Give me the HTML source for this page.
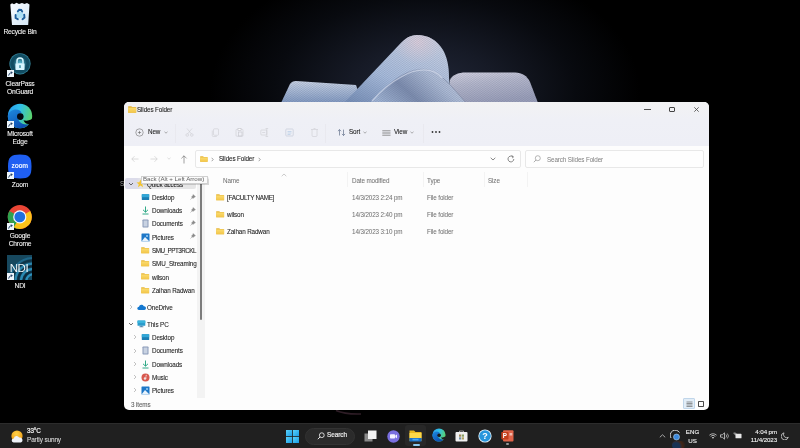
<!DOCTYPE html>
<html><head><meta charset="utf-8">
<style>
*{margin:0;padding:0;box-sizing:border-box}
html,body{width:800px;height:448px;overflow:hidden;background:#000;font-family:"Liberation Sans",sans-serif}
.a{position:absolute;white-space:nowrap;will-change:transform}
#wp{position:absolute;left:0;top:0;width:800px;height:448px}
.di{position:absolute;will-change:transform;width:40px;text-align:center;color:#f2f2f2;font-size:6.7px;letter-spacing:-0.2px;line-height:8px;left:0;-webkit-text-stroke:0.1px currentColor}
#win{position:absolute;left:124px;top:102px;width:585px;height:308px;border-radius:5px;background:#fdfdfd;overflow:hidden}
#tb{position:absolute;left:0;top:0;width:585px;height:43.5px;background:linear-gradient(#f2f2f3,#eff0f6 40%,#eeeff6)}
.t{font-size:6.3px;letter-spacing:-0.12px;color:#1c1c1c;line-height:8px;-webkit-text-stroke:0.08px currentColor}
.g{color:#5c5c5c}
#task{position:absolute;left:0;top:423px;width:800px;height:25px;background:#202020}
</style></head><body>
<svg id="wp" viewBox="0 0 800 448">
<defs>
<radialGradient id="bg" cx="0" cy="0" r="1" gradientUnits="userSpaceOnUse" gradientTransform="translate(425 92) scale(215 135)">
<stop offset="0" stop-color="#222839"/><stop offset="0.35" stop-color="#161a26"/><stop offset="0.7" stop-color="#080a0f"/><stop offset="1" stop-color="#000"/></radialGradient>
<linearGradient id="rib" x1="0" y1="0" x2="0" y2="1">
<stop offset="0" stop-color="#d4cad6"/><stop offset="0.35" stop-color="#b4c0d8"/><stop offset="1" stop-color="#8e9cbc"/>
</linearGradient>
<linearGradient id="ribL" x1="0" y1="0" x2="0" y2="1">
<stop offset="0" stop-color="#cdd6e6"/><stop offset="0.35" stop-color="#b0c0da"/><stop offset="1" stop-color="#8098c0"/></linearGradient>
<linearGradient id="ribA" x1="0.1" y1="1" x2="0.75" y2="0">
<stop offset="0" stop-color="#7890b8"/><stop offset="0.4" stop-color="#a8bcdc"/><stop offset="1" stop-color="#cad2e4"/></linearGradient>
<linearGradient id="ribR" x1="0" y1="0" x2="0.3" y2="1">
<stop offset="0" stop-color="#d6d4e2"/><stop offset="0.4" stop-color="#b6b8cc"/><stop offset="1" stop-color="#9a9eb8"/></linearGradient>
<linearGradient id="ribM" x1="0" y1="0.7" x2="1" y2="0.3">
<stop offset="0" stop-color="#a0b4d4"/><stop offset="0.35" stop-color="#7c8cae"/><stop offset="0.7" stop-color="#aebcd6"/><stop offset="1" stop-color="#c4cce0"/></linearGradient>
<radialGradient id="hiA" cx="0" cy="0" r="1" gradientUnits="userSpaceOnUse" gradientTransform="translate(418 42) scale(26 22)">
<stop offset="0" stop-color="#e2d0dc" stop-opacity="0.85"/><stop offset="1" stop-color="#d8ccd8" stop-opacity="0"/></radialGradient>
<linearGradient id="fdG" x1="0" y1="0" x2="0" y2="1"><stop offset="0" stop-color="#fbdc70"/><stop offset="1" stop-color="#f2c548"/></linearGradient>
<pattern id="stripes" width="1.6" height="1.6" patternUnits="userSpaceOnUse" patternTransform="rotate(35)"><rect width="1.6" height="0.6" fill="#5a6886"/></pattern>
<linearGradient id="rib2" x1="0" y1="0" x2="1" y2="1">
<stop offset="0" stop-color="#c8ccdc"/><stop offset="1" stop-color="#7e8cac"/>
</linearGradient>
</defs>
<rect width="800" height="448" fill="url(#bg)"/>
<path d="M336,410.5 Q345,414.5 361,414" fill="none" stroke="#3a2430" stroke-width="1.4" opacity="0.8"/>
<path d="M281,103 L290,84 Q292,81 296,81 L356,85 L362,103 Z" fill="url(#ribL)"/>
<path d="M281,103 L290,84 Q292,81 296,81 L356,85 L362,103 Z" fill="url(#stripes)" opacity="0.35"/>
<path d="M344,103 L399,45 C405,38.5 410,35 417,35 C428,35 437,40 443,50 C447,57 449,66 449,78 L452,103 Z" fill="url(#ribA)"/>
<path d="M344,103 L399,45 C405,38.5 410,35 417,35 C428,35 437,40 443,50 C447,57 449,66 449,78 L452,103 Z" fill="url(#hiA)"/>
<path d="M344,103 L399,45 C405,38.5 410,35 417,35 C428,35 437,40 443,50 C447,57 449,66 449,78 L452,103 Z" fill="url(#stripes)" opacity="0.3"/>
<path d="M449,103 L450,80 C452,75 458,72.5 466,72.5 L515,72.5 C522,72.5 527,76 530,82 L538,103 Z" fill="url(#ribR)"/>
<path d="M449,103 L450,80 C452,75 458,72.5 466,72.5 L515,72.5 C522,72.5 527,76 530,82 L538,103 Z" fill="url(#stripes)" opacity="0.3"/>
<path d="M370,103 C378,94 388,84 400,76 C410,70 417,68.5 424,68.5 C432,68.5 438,72 443,78 C452,86 459,95 466,103 Z" fill="url(#ribM)"/>
<path d="M370,103 C378,94 388,84 400,76 C410,70 417,68.5 424,68.5 C432,68.5 438,72 443,78 C452,86 459,95 466,103 Z" fill="url(#stripes)" opacity="0.35"/>
<path d="M372,101 C380,92 390,83 401,77 C410,71.5 417,70 424,70 C432,70 438,73 442,78" fill="none" stroke="#d4dcec" stroke-width="1.2" opacity="0.7"/>
<path d="M443,78 C452,86 459,95 466,103" fill="none" stroke="#6a7490" stroke-width="0.8" opacity="0.6"/>
</svg>

<!-- desktop icons -->
<svg class="a" style="left:9px;top:1.5px" width="22" height="24" viewBox="0 0 22 24">
 <defs><linearGradient id="binG" x1="0" y1="0" x2="1" y2="1"><stop offset="0" stop-color="#f8fbff"/><stop offset="1" stop-color="#d4e6f4"/></linearGradient></defs>
 <path d="M1.3,2.5 L3,1.3 L5,2.2 L7.5,0.8 L10,2 L13,0.9 L15.5,2.1 L18,1 L20.5,2.4 L19.2,23 L3,23 Z" fill="url(#binG)"/>
 <ellipse cx="10.8" cy="13" rx="3.5" ry="3.3" fill="#9fdcf4" opacity="0.8"/>
 <g fill="none" stroke="#1c5e9c" stroke-width="1.9" stroke-linecap="round"><path d="M8.8,9.4 L10.2,7.8 L12.2,8 L13.2,9.6"/><path d="M15.2,12.6 L15.5,15.5 L13.5,17.2"/><path d="M8.8,17.2 L6.6,16 L6.6,13"/></g>
</svg>
<div class="di" style="top:28px">Recycle Bin</div>

<svg class="a" style="left:8px;top:52px" width="24" height="24" viewBox="0 0 24 24">
 <defs><radialGradient id="cpG" cx="0.5" cy="0.5" r="0.5"><stop offset="0" stop-color="#2a7e96"/><stop offset="0.55" stop-color="#0f4a60"/><stop offset="0.88" stop-color="#124e64"/><stop offset="1" stop-color="#3a90a8"/></radialGradient>
 <radialGradient id="cpL" cx="0.5" cy="0.5" r="0.5"><stop offset="0" stop-color="#7fe0f8" stop-opacity="0.7"/><stop offset="1" stop-color="#7fe0f8" stop-opacity="0"/></radialGradient></defs>
 <circle cx="12" cy="11.8" r="10.6" fill="url(#cpG)"/>
 <circle cx="12" cy="11.5" r="7" fill="url(#cpL)"/>
 <path d="M9,11.4 V9 a3,3 0 0 1 6,0 V11.4" fill="none" stroke="#d8f6ff" stroke-width="1.5"/>
 <rect x="7.4" y="11.2" width="9.2" height="6.8" rx="0.8" fill="#d8f6ff"/>
 <rect x="11.3" y="13.2" width="1.4" height="2.8" fill="#3a8aa0"/>
</svg>
<div class="di" style="top:79.5px">ClearPass<br>OnGuard</div>

<svg class="a" style="left:7px;top:102.5px" width="26" height="26" viewBox="0 0 26 26">
 <defs>
  <linearGradient id="edA" x1="0" y1="0.2" x2="1" y2="0.5"><stop offset="0" stop-color="#2a9ef0"/><stop offset="0.45" stop-color="#30c0e8"/><stop offset="1" stop-color="#5cd46a"/></linearGradient>
  <linearGradient id="edB" x1="0" y1="0" x2="0.6" y2="1"><stop offset="0" stop-color="#1e8ae0"/><stop offset="1" stop-color="#0c4eb0"/></linearGradient>
 </defs>
 <circle cx="13" cy="13" r="12.2" fill="url(#edA)"/>
 <path d="M0.8,13 C1.5,9 5,6.5 9,6.5 C12,6.5 14,8 14.5,10 C12,10.5 10.5,13 11,15.5 C12,20 17,22.5 22,21 C20,23.8 16.5,25.2 13,25.2 C6,25.2 0.8,20 0.8,13Z" fill="url(#edB)"/>
 <ellipse cx="13.3" cy="13.6" rx="3.3" ry="3.4" fill="#040810"/>
 <path d="M16.5,17.2 C19.5,18.2 23,17.5 25.5,15.5 L26,26 L17,26 C19,25 21,23 22,21 C19.5,21.5 17.5,19.5 16.5,17.2Z" fill="#000"/>
</svg>
<div class="di" style="top:130px">Microsoft<br>Edge</div>

<svg class="a" style="left:7px;top:154px" width="26" height="25" viewBox="0 0 26 25">
 <path d="M13,0.5 C22,0.5 24.5,3 24.5,12.5 C24.5,22 22,24.5 13,24.5 C4,24.5 1,22 1,12.5 C1,3 4,0.5 13,0.5Z" fill="#1f5ff2"/>
 <text x="12.8" y="14.3" text-anchor="middle" font-family="Liberation Sans" font-weight="bold" font-size="6.6" letter-spacing="-0.2" fill="#eef4ff">zoom</text>
</svg>
<div class="di" style="top:181px">Zoom</div>

<svg class="a" style="left:7px;top:204px" width="26" height="26" viewBox="0 0 26 26">
 <circle cx="12.8" cy="12.9" r="12" fill="#e94535"/>
 <path d="M12.8,12.9 L2.4,18.9 A12,12 0 0 1 2.4,6.9 L7.6,9.9 Z" fill="#2ea24e"/>
 <path d="M12.8,12.9 L2.4,18.9 A12,12 0 0 0 12.8,24.9 L12.8,24.9 Z" fill="#2ea24e"/>
 <path d="M12.8,12.9 L24.8,12.9 A12,12 0 0 1 6.8,23.3 Z" fill="#fbc21a"/>
 <path d="M12.8,12.9 L23.2,6.9 A12,12 0 0 1 24.8,12.9 Z" fill="#fbc21a"/>
 <circle cx="12.8" cy="12.9" r="6.6" fill="#f4f8ff"/>
 <circle cx="12.8" cy="12.9" r="5.4" fill="#1f6fe0"/>
</svg>
<div class="di" style="top:232px">Google<br>Chrome</div>

<svg class="a" style="left:7px;top:255px" width="25" height="25" viewBox="0 0 25 25">
 <defs><clipPath id="ndC"><rect width="25" height="25"/></clipPath></defs>
 <g clip-path="url(#ndC)">
 <rect x="0" y="0" width="25" height="25" fill="#17485e"/>
 <g fill="none" stroke-width="2.2">
  <circle cx="26" cy="26" r="23" stroke="#1e6688"/>
  <circle cx="26" cy="26" r="20.5" stroke="#0e3448"/>
  <circle cx="26" cy="26" r="17.5" stroke="#2a84ac"/>
  <circle cx="26" cy="26" r="14.8" stroke="#0c2c40"/>
  <circle cx="26" cy="26" r="12" stroke="#2a8ab4"/>
  <circle cx="26" cy="26" r="9.3" stroke="#0c2c40"/>
  <circle cx="26" cy="26" r="6.6" stroke="#2c90bc"/>
 </g>
 <text x="12" y="16.8" text-anchor="middle" font-family="Liberation Sans" font-size="11.5" letter-spacing="-0.4" fill="#f0f8fc">NDI</text>
 </g>
</svg>
<div class="di" style="top:282px">NDI</div>
<svg class="a" style="left:7px;top:70px" width="7" height="7" viewBox="0 0 7 7"><rect width="7" height="7" fill="#eef6fc"/><path d="M1.6,5.6 Q2,3 4.6,2.4" fill="none" stroke="#2a4468" stroke-width="1"/><path d="M3.6,1.2 L5.8,2.2 L4.4,4.2z" fill="#2a4468"/></svg>
<svg class="a" style="left:7px;top:121px" width="7" height="7" viewBox="0 0 7 7"><rect width="7" height="7" fill="#eef6fc"/><path d="M1.6,5.6 Q2,3 4.6,2.4" fill="none" stroke="#2a4468" stroke-width="1"/><path d="M3.6,1.2 L5.8,2.2 L4.4,4.2z" fill="#2a4468"/></svg>
<svg class="a" style="left:7px;top:172px" width="7" height="7" viewBox="0 0 7 7"><rect width="7" height="7" fill="#eef6fc"/><path d="M1.6,5.6 Q2,3 4.6,2.4" fill="none" stroke="#2a4468" stroke-width="1"/><path d="M3.6,1.2 L5.8,2.2 L4.4,4.2z" fill="#2a4468"/></svg>
<svg class="a" style="left:7px;top:223px" width="7" height="7" viewBox="0 0 7 7"><rect width="7" height="7" fill="#eef6fc"/><path d="M1.6,5.6 Q2,3 4.6,2.4" fill="none" stroke="#2a4468" stroke-width="1"/><path d="M3.6,1.2 L5.8,2.2 L4.4,4.2z" fill="#2a4468"/></svg>
<svg class="a" style="left:7px;top:273px" width="7" height="7" viewBox="0 0 7 7"><rect width="7" height="7" fill="#eef6fc"/><path d="M1.6,5.6 Q2,3 4.6,2.4" fill="none" stroke="#2a4468" stroke-width="1"/><path d="M3.6,1.2 L5.8,2.2 L4.4,4.2z" fill="#2a4468"/></svg>

<div class="a" style="left:119.5px;top:179.5px;font-size:6.5px;line-height:8px;color:#9a9a9a">S</div>
<div id="win">
 <div id="tb"></div>
 <!-- title -->
 <svg class="a" style="left:3.7px;top:4px" width="9" height="7" viewBox="0 0 9 7"><path d="M0.2,0.2 h3 l1,0.9 h4 v5.6 h-8z" fill="#e6b63a"/><path d="M0.2,1.7 h8 v5 h-8z" fill="url(#fdG)"/></svg>
 <div class="a t" style="left:13px;top:3.5px;color:#202020">Slides Folder</div>
 <div class="a" style="left:520px;top:7.2px;width:7px;height:0.7px;background:#505050"></div>
 <div class="a" style="left:545px;top:5px;width:5.5px;height:4.8px;border:1px solid #444;border-radius:1px"></div>
 <svg class="a" style="left:570px;top:5px" width="5" height="5" viewBox="0 0 5 5"><path d="M0.3,0.3 L4.7,4.7 M4.7,0.3 L0.3,4.7" stroke="#444" stroke-width="0.8"/></svg>
 <!-- command bar -->
 <svg class="a" style="left:11px;top:26px" width="9" height="9" viewBox="0 0 9 9"><circle cx="4.5" cy="4.5" r="3.7" fill="none" stroke="#5a5a5a" stroke-width="0.5"/><path d="M4.5,2.9 v3.2 M2.9,4.5 h3.2" stroke="#5a5a5a" stroke-width="0.55"/></svg>
 <div class="a t" style="left:23.5px;top:26px">New</div>
 <svg class="a" style="left:40px;top:29px" width="4" height="3" viewBox="0 0 4 3"><path d="M0.5,0.8 L2,2.2 L3.5,0.8" fill="none" stroke="#777" stroke-width="0.6"/></svg>
 <div class="a" style="left:51px;top:22px;width:1px;height:19px;background:#e9e9ef"></div>
 <!-- disabled icons -->
 <svg class="a" style="left:61px;top:26px" width="9" height="9" viewBox="0 0 9 9"><path d="M2,0.5 L6.5,6 M7,0.5 L2.5,6" stroke="#cacad0" stroke-width="0.55"/><circle cx="2.2" cy="7" r="1.3" fill="none" stroke="#cacad0" stroke-width="0.55"/><circle cx="6.8" cy="7" r="1.3" fill="none" stroke="#cacad0" stroke-width="0.55"/></svg>
 <svg class="a" style="left:87px;top:26px" width="9" height="9" viewBox="0 0 9 9"><rect x="2.5" y="0.8" width="5" height="6.5" rx="1" fill="none" stroke="#cacad0" stroke-width="0.55"/><path d="M1.3,2.5 v5 a1,1 0 0 0 1,1 h3.5" fill="none" stroke="#cacad0" stroke-width="0.55"/></svg>
 <svg class="a" style="left:111px;top:26px" width="9" height="9" viewBox="0 0 9 9"><rect x="1" y="1.3" width="7" height="7" rx="1" fill="none" stroke="#cacad0" stroke-width="0.55"/><rect x="3" y="0.5" width="3" height="1.8" fill="#fff" stroke="#c4c4ca" stroke-width="0.6"/><rect x="3.5" y="4" width="3.5" height="4" fill="none" stroke="#c4c4ca" stroke-width="0.6"/></svg>
 <svg class="a" style="left:136px;top:26px" width="9" height="9" viewBox="0 0 9 9"><rect x="0.8" y="2" width="6" height="5" rx="0.8" fill="none" stroke="#cacad0" stroke-width="0.55"/><path d="M6.8,0.5 v8 M5.5,0.5 h2.6 M5.5,8.5 h2.6 M2.2,4.5 h3" stroke="#cacad0" stroke-width="0.55"/></svg>
 <svg class="a" style="left:161px;top:26px" width="9" height="9" viewBox="0 0 9 9"><rect x="0.8" y="1" width="7.4" height="7" rx="0.8" fill="none" stroke="#c6ccd8" stroke-width="0.7"/><path d="M2.5,3.5 h4 M2.5,5 h4 M2.5,6.5 h3" stroke="#bcd0e8" stroke-width="0.8"/></svg>
 <svg class="a" style="left:186px;top:26px" width="9" height="9" viewBox="0 0 9 9"><path d="M1,1.5 h7 M2,1.5 v6 a1,1 0 0 0 1,1 h3 a1,1 0 0 0 1,-1 v-6 M3.5,0.5 h2" fill="none" stroke="#cacad0" stroke-width="0.55"/></svg>
 <div class="a" style="left:201px;top:22px;width:1px;height:19px;background:#e9e9ef"></div>
 <svg class="a" style="left:212.5px;top:27px" width="9" height="7" viewBox="0 0 9 7"><path d="M2.5,6.5 V0.6 M0.9,2.2 L2.5,0.6 L4.1,2.2 M6.5,0.6 V6.5 M4.9,4.9 L6.5,6.5 L8.1,4.9" fill="none" stroke="#4a5a78" stroke-width="0.6"/></svg>
 <div class="a t" style="left:224.5px;top:26px">Sort</div>
 <svg class="a" style="left:239px;top:29px" width="4" height="3" viewBox="0 0 4 3"><path d="M0.5,0.8 L2,2.2 L3.5,0.8" fill="none" stroke="#777" stroke-width="0.6"/></svg>
 <svg class="a" style="left:257.5px;top:27.5px" width="9" height="6" viewBox="0 0 9 6"><path d="M0.3,0.6 h8.2 M0.3,2.2 h8.2 M0.3,3.8 h8.2 M0.3,5.4 h8.2" stroke="#666" stroke-width="0.55"/></svg>
 <div class="a t" style="left:269.5px;top:26px">View</div>
 <svg class="a" style="left:286px;top:29px" width="4" height="3" viewBox="0 0 4 3"><path d="M0.5,0.8 L2,2.2 L3.5,0.8" fill="none" stroke="#777" stroke-width="0.6"/></svg>
 <div class="a" style="left:299px;top:22px;width:1px;height:19px;background:#e9e9ef"></div>
 <svg class="a" style="left:307px;top:28px" width="10" height="4" viewBox="0 0 10 4"><circle cx="1.5" cy="2" r="0.9" fill="#333"/><circle cx="5" cy="2" r="0.9" fill="#333"/><circle cx="8.5" cy="2" r="0.9" fill="#333"/></svg>
 <!-- address row -->
 <svg class="a" style="left:7px;top:53px" width="8" height="8" viewBox="0 0 8 8"><path d="M7.5,4 H0.8 M3.5,1.2 L0.8,4 L3.5,6.8" fill="none" stroke="#c2c2c2" stroke-width="0.55"/></svg>
 <svg class="a" style="left:26px;top:53px" width="8" height="8" viewBox="0 0 8 8"><path d="M0.5,4 H7.2 M4.5,1.2 L7.2,4 L4.5,6.8" fill="none" stroke="#c2c2c2" stroke-width="0.55"/></svg>
 <svg class="a" style="left:43px;top:55px" width="4" height="3" viewBox="0 0 4 3"><path d="M0.5,0.8 L2,2.2 L3.5,0.8" fill="none" stroke="#c8c8c8" stroke-width="0.6"/></svg>
 <svg class="a" style="left:56px;top:53px" width="8" height="9" viewBox="0 0 8 9"><path d="M4,8.5 V0.8 M1.4,3.4 L4,0.8 L6.6,3.4" fill="none" stroke="#555" stroke-width="0.55"/></svg>
 <div class="a" style="left:71px;top:48px;width:326px;height:18px;border:0.5px solid #e8e8e8;background:#fefefe;border-radius:2px"></div>
 <svg class="a" style="left:76px;top:54.3px" width="8" height="6" viewBox="0 0 8 6"><path d="M0.2,0.2 h2.8 l0.9,0.8 h3.7 v4.8 h-7.4z" fill="#e6b63a"/><path d="M0.2,1.5 h7.4 v4.3 h-7.4z" fill="url(#fdG)"/></svg>
 <svg class="a" style="left:87px;top:55px" width="3" height="5" viewBox="0 0 3 5"><path d="M0.7,0.8 L2.2,2.5 L0.7,4.2" fill="none" stroke="#666" stroke-width="0.6"/></svg>
 <div class="a t" style="left:94.5px;top:53.4px">Slides Folder</div>
 <svg class="a" style="left:134px;top:55px" width="3" height="5" viewBox="0 0 3 5"><path d="M0.7,0.8 L2.2,2.5 L0.7,4.2" fill="none" stroke="#666" stroke-width="0.6"/></svg>
 <svg class="a" style="left:366px;top:55px" width="6" height="4" viewBox="0 0 6 4"><path d="M0.7,0.8 L3,3 L5.3,0.8" fill="none" stroke="#555" stroke-width="0.7"/></svg>
 <svg class="a" style="left:383px;top:53px" width="8" height="8" viewBox="0 0 8 8"><path d="M6.8,4 A2.9,2.9 0 1 1 5.8,1.8" fill="none" stroke="#555" stroke-width="0.7"/><path d="M4.6,0.6 L6.3,1.6 L5.5,3.2" fill="none" stroke="#555" stroke-width="0.7"/></svg>
 <div class="a" style="left:401px;top:48px;width:179px;height:18px;border:0.5px solid #e8e8e8;background:#fefefe;border-radius:2px"></div>
 <svg class="a" style="left:409px;top:53px" width="8" height="8" viewBox="0 0 8 8"><circle cx="4.8" cy="3.2" r="2.5" fill="none" stroke="#888" stroke-width="0.6"/><path d="M3,5 L0.8,7.2" stroke="#888" stroke-width="0.7"/></svg>
 <div class="a t g" style="left:422.8px;top:53.6px;color:#7e7e7e;-webkit-text-stroke:0">Search Slides Folder</div>
 <!-- column headers -->
 <svg class="a" style="left:157px;top:71px" width="6" height="4" viewBox="0 0 6 4"><path d="M0.7,3.2 L3,1 L5.3,3.2" fill="none" stroke="#aaa" stroke-width="0.6"/></svg>
 <div class="a t g" style="left:98.5px;top:74.60px;color:#727272;-webkit-text-stroke:0.04px currentColor">Name</div>
 <div class="a" style="left:223px;top:70px;width:1px;height:15px;background:#f3f3f3"></div>
 <div class="a t g" style="left:228.0px;top:74.60px;color:#727272;-webkit-text-stroke:0.04px currentColor">Date modified</div>
 <div class="a" style="left:299px;top:70px;width:1px;height:15px;background:#f3f3f3"></div>
 <div class="a t g" style="left:302.6px;top:74.60px;color:#727272;-webkit-text-stroke:0.04px currentColor">Type</div>
 <div class="a" style="left:360px;top:70px;width:1px;height:15px;background:#f3f3f3"></div>
 <div class="a t g" style="left:364.0px;top:74.60px;color:#727272;-webkit-text-stroke:0.04px currentColor">Size</div>
 <div class="a" style="left:403px;top:70px;width:1px;height:15px;background:#f3f3f3"></div>
 <!-- rows -->
 <svg class="a" style="left:92.30px;top:92.10px" width="9" height="7" viewBox="0 0 9 7"><path d="M0.2,0.2 h3 l0.9,0.8 h4 v5.2 h-7.9z" fill="#e6b63a"/><path d="M0.2,1.5 h7.9 v4.7 h-7.9z" fill="url(#fdG)"/></svg>
 <div class="a t" style="left:103px;top:91.9px;letter-spacing:-0.3px">[FACULTY NAME]</div>
 <div class="a t g" style="left:228.0px;top:92.00px;color:#727272;-webkit-text-stroke:0.04px currentColor">14/3/2023 2:24 pm</div>
 <div class="a t g" style="left:302.6px;top:92.00px;color:#727272;-webkit-text-stroke:0.04px currentColor">File folder</div>
 <svg class="a" style="left:92.30px;top:109.10px" width="9" height="7" viewBox="0 0 9 7"><path d="M0.2,0.2 h3 l0.9,0.8 h4 v5.2 h-7.9z" fill="#e6b63a"/><path d="M0.2,1.5 h7.9 v4.7 h-7.9z" fill="url(#fdG)"/></svg>
 <div class="a t" style="left:103px;top:108.9px">wilson</div>
 <div class="a t g" style="left:228.0px;top:109.00px;color:#727272;-webkit-text-stroke:0.04px currentColor">14/3/2023 2:40 pm</div>
 <div class="a t g" style="left:302.6px;top:109.00px;color:#727272;-webkit-text-stroke:0.04px currentColor">File folder</div>
 <svg class="a" style="left:92.30px;top:126.10px" width="9" height="7" viewBox="0 0 9 7"><path d="M0.2,0.2 h3 l0.9,0.8 h4 v5.2 h-7.9z" fill="#e6b63a"/><path d="M0.2,1.5 h7.9 v4.7 h-7.9z" fill="url(#fdG)"/></svg>
 <div class="a t" style="left:103px;top:125.9px">Zaihan Radwan</div>
 <div class="a t g" style="left:228.0px;top:126.00px;color:#727272;-webkit-text-stroke:0.04px currentColor">14/3/2023 3:10 pm</div>
 <div class="a t g" style="left:302.6px;top:126.00px;color:#727272;-webkit-text-stroke:0.04px currentColor">File folder</div>
 <!-- nav -->
 <div class="a" style="left:73px;top:76px;width:8px;height:220px;background:#f3f3f3"></div>
 <div class="a" style="left:75.7px;top:81.4px;width:2.2px;height:136.6px;background:#7c7c7c;border-radius:1.1px"></div>
 <div class="a" style="left:0.5px;top:76.2px;width:71px;height:10.5px;background:linear-gradient(90deg,#dcdcea 0,#dcdcea 12px,#e4e4e6 16px,#e6e6e6 100%);border-radius:2px"></div>
 <svg class="a" style="left:3.5px;top:79.5px" width="6" height="4" viewBox="0 0 6 4"><path d="M1,1 L3,3 L5,1" fill="none" stroke="#333" stroke-width="0.7"/></svg>
 <svg class="a" style="left:11.5px;top:77.3px" width="9" height="9" viewBox="0 0 9 9"><path d="M4.5,0.5 L5.7,3.2 L8.5,3.4 L6.3,5.2 L7,8.3 L4.5,6.6 L2,8.3 L2.7,5.2 L0.5,3.4 L3.3,3.2z" fill="#f4c430"/></svg>
 <div class="a t" style="left:23px;top:78.80px;">Quick access</div>
 <svg class="a" style="left:16.5px;top:90.7px" width="9" height="8" viewBox="0 0 9 8"><rect x="0.8" y="1.2" width="7.4" height="5.8" rx="0.5" fill="#1c7fb4"/><rect x="0.8" y="1.2" width="7.4" height="3" fill="#32a8d8"/></svg>
 <div class="a t" style="left:28px;top:91.80px;">Desktop</div>
 <svg class="a" style="left:65.5px;top:91.5px" width="6" height="6" viewBox="0 0 6 6"><path d="M3.2,0.6 L5.4,2.8 L4.3,3.2 L3,4.5 L1.5,3 L2.8,1.7z M2.2,3.8 L0.5,5.5" fill="#8a8a8a" stroke="#8a8a8a" stroke-width="0.5"/></svg>
 <svg class="a" style="left:16.5px;top:104.03px" width="9" height="9" viewBox="0 0 9 9"><path d="M4.5,0.5 V6 M2,3.8 L4.5,6.2 L7,3.8" fill="none" stroke="#1aa07a" stroke-width="0.9"/><path d="M1.5,8 h6" stroke="#1aa07a" stroke-width="0.9"/></svg>
 <div class="a t" style="left:28px;top:105.13px;">Downloads</div>
 <svg class="a" style="left:65.5px;top:104.83px" width="6" height="6" viewBox="0 0 6 6"><path d="M3.2,0.6 L5.4,2.8 L4.3,3.2 L3,4.5 L1.5,3 L2.8,1.7z M2.2,3.8 L0.5,5.5" fill="#8a8a8a" stroke="#8a8a8a" stroke-width="0.5"/></svg>
 <svg class="a" style="left:16.5px;top:117.36px" width="9" height="9" viewBox="0 0 9 9"><rect x="1.5" y="0.5" width="6" height="8" rx="0.7" fill="#8a9ab8"/><rect x="2.5" y="1.5" width="4" height="6" fill="#c8d2e2"/></svg>
 <div class="a t" style="left:28px;top:118.46px;">Documents</div>
 <svg class="a" style="left:65.5px;top:118.16px" width="6" height="6" viewBox="0 0 6 6"><path d="M3.2,0.6 L5.4,2.8 L4.3,3.2 L3,4.5 L1.5,3 L2.8,1.7z M2.2,3.8 L0.5,5.5" fill="#8a8a8a" stroke="#8a8a8a" stroke-width="0.5"/></svg>
 <svg class="a" style="left:16.5px;top:130.69px" width="9" height="9" viewBox="0 0 9 9"><rect x="0.5" y="0.5" width="8" height="8" rx="0.6" fill="#1e78c8"/><path d="M0.5,8.5 L4,4 L8.5,8.5z" fill="#e8f2fb"/><circle cx="6" cy="3" r="1" fill="#9fd0f4"/></svg>
 <div class="a t" style="left:28px;top:131.79px;">Pictures</div>
 <svg class="a" style="left:65.5px;top:131.49px" width="6" height="6" viewBox="0 0 6 6"><path d="M3.2,0.6 L5.4,2.8 L4.3,3.2 L3,4.5 L1.5,3 L2.8,1.7z M2.2,3.8 L0.5,5.5" fill="#8a8a8a" stroke="#8a8a8a" stroke-width="0.5"/></svg>
 <svg class="a" style="left:16.80px;top:144.82px" width="9" height="7" viewBox="0 0 9 7"><path d="M0.2,0.2 h3 l0.9,0.8 h4 v5.2 h-7.9z" fill="#e6b63a"/><path d="M0.2,1.5 h7.9 v4.7 h-7.9z" fill="url(#fdG)"/></svg>
 <div class="a t" style="left:28px;top:145.12px;letter-spacing:-0.5px">SMU_PPT3RCKL</div>
 <svg class="a" style="left:16.80px;top:158.15px" width="9" height="7" viewBox="0 0 9 7"><path d="M0.2,0.2 h3 l0.9,0.8 h4 v5.2 h-7.9z" fill="#e6b63a"/><path d="M0.2,1.5 h7.9 v4.7 h-7.9z" fill="url(#fdG)"/></svg>
 <div class="a t" style="left:28px;top:158.45px;">SMU_Streaming</div>
 <svg class="a" style="left:16.80px;top:171.48px" width="9" height="7" viewBox="0 0 9 7"><path d="M0.2,0.2 h3 l0.9,0.8 h4 v5.2 h-7.9z" fill="#e6b63a"/><path d="M0.2,1.5 h7.9 v4.7 h-7.9z" fill="url(#fdG)"/></svg>
 <div class="a t" style="left:28px;top:171.78px;">wilson</div>
 <svg class="a" style="left:16.80px;top:184.81px" width="9" height="7" viewBox="0 0 9 7"><path d="M0.2,0.2 h3 l0.9,0.8 h4 v5.2 h-7.9z" fill="#e6b63a"/><path d="M0.2,1.5 h7.9 v4.7 h-7.9z" fill="url(#fdG)"/></svg>
 <div class="a t" style="left:28px;top:185.11px;">Zaihan Radwan</div>
 <svg class="a" style="left:5.2px;top:202.3px" width="4" height="6" viewBox="0 0 4 6"><path d="M1,1 L3,3 L1,5" fill="none" stroke="#9a9a9a" stroke-width="0.6"/></svg>
 <svg class="a" style="left:12.8px;top:201.8px" width="9" height="7" viewBox="0 0 9 7"><path d="M1.8,6 a1.6,1.6 0 0 1 0.2,-3.2 a2.6,2.6 0 0 1 4.8,-0.6 a1.9,1.9 0 0 1 0.5,3.8z" fill="#1478d0"/></svg>
 <div class="a t" style="left:23.4px;top:202.10px;">OneDrive</div>
 <svg class="a" style="left:4px;top:220px" width="6" height="4" viewBox="0 0 6 4"><path d="M1,1 L3,3 L5,1" fill="none" stroke="#333" stroke-width="0.7"/></svg>
 <svg class="a" style="left:12.8px;top:217.5px" width="9" height="9" viewBox="0 0 9 9"><rect x="0.5" y="0.6" width="7.8" height="5.2" rx="0.4" fill="#2a9ccc"/><rect x="0.5" y="0.6" width="7.8" height="2.4" fill="#3ab4dc"/><rect x="3.4" y="5.8" width="2" height="0.8" fill="#2a6c9c"/><rect x="2.4" y="6.5" width="4" height="0.7" fill="#2a6c9c"/></svg>
 <div class="a t" style="left:23.4px;top:218.60px;">This PC</div>
 <svg class="a" style="left:9px;top:232.2px" width="4" height="6" viewBox="0 0 4 6"><path d="M1,1 L3,3 L1,5" fill="none" stroke="#9a9a9a" stroke-width="0.6"/></svg>
 <svg class="a" style="left:16.7px;top:230.9px" width="9" height="8" viewBox="0 0 9 8"><rect x="0.8" y="1.2" width="7.4" height="5.8" rx="0.5" fill="#1c7fb4"/><rect x="0.8" y="1.2" width="7.4" height="3" fill="#32a8d8"/></svg>
 <div class="a t" style="left:28px;top:232.00px;">Desktop</div>
 <svg class="a" style="left:9px;top:245.5px" width="4" height="6" viewBox="0 0 4 6"><path d="M1,1 L3,3 L1,5" fill="none" stroke="#9a9a9a" stroke-width="0.6"/></svg>
 <svg class="a" style="left:16.7px;top:244.2px" width="9" height="9" viewBox="0 0 9 9"><rect x="1.5" y="0.5" width="6" height="8" rx="0.7" fill="#8a9ab8"/><rect x="2.5" y="1.5" width="4" height="6" fill="#c8d2e2"/></svg>
 <div class="a t" style="left:28px;top:245.30px;">Documents</div>
 <svg class="a" style="left:9px;top:258.8px" width="4" height="6" viewBox="0 0 4 6"><path d="M1,1 L3,3 L1,5" fill="none" stroke="#9a9a9a" stroke-width="0.6"/></svg>
 <svg class="a" style="left:16.7px;top:257.5px" width="9" height="9" viewBox="0 0 9 9"><path d="M4.5,0.5 V6 M2,3.8 L4.5,6.2 L7,3.8" fill="none" stroke="#1aa07a" stroke-width="0.9"/><path d="M1.5,8 h6" stroke="#1aa07a" stroke-width="0.9"/></svg>
 <div class="a t" style="left:28px;top:258.60px;">Downloads</div>
 <svg class="a" style="left:9px;top:272.1px" width="4" height="6" viewBox="0 0 4 6"><path d="M1,1 L3,3 L1,5" fill="none" stroke="#9a9a9a" stroke-width="0.6"/></svg>
 <svg class="a" style="left:16.7px;top:270.8px" width="9" height="9" viewBox="0 0 9 9"><circle cx="4.5" cy="4.5" r="4" fill="#d85a50"/><circle cx="4" cy="5.5" r="1.2" fill="#f2e0e0"/><path d="M5,5.5 V2 L6,2.6" fill="none" stroke="#f2e0e0" stroke-width="0.6"/></svg>
 <div class="a t" style="left:28px;top:271.90px;">Music</div>
 <svg class="a" style="left:9px;top:285.4px" width="4" height="6" viewBox="0 0 4 6"><path d="M1,1 L3,3 L1,5" fill="none" stroke="#9a9a9a" stroke-width="0.6"/></svg>
 <svg class="a" style="left:16.7px;top:284.1px" width="9" height="9" viewBox="0 0 9 9"><rect x="0.5" y="0.5" width="8" height="8" rx="0.6" fill="#1e78c8"/><path d="M0.5,8.5 L4,4 L8.5,8.5z" fill="#e8f2fb"/><circle cx="6" cy="3" r="1" fill="#9fd0f4"/></svg>
 <div class="a t" style="left:28px;top:285.20px;">Pictures</div>
 <!-- tooltip -->
 <div class="a" style="left:17px;top:73.6px;width:67.2px;height:7.6px;background:#fcfcfc;border:0.5px solid #d0d0d0;box-shadow:0.6px 0.6px 1px rgba(0,0,0,0.15)"></div>
 <div class="a t" style="left:18.6px;top:73px;color:#606060;font-size:6.2px;letter-spacing:-0.02px;-webkit-text-stroke:0">Back (Alt + Left Arrow)</div>
 <!-- view buttons -->
 <div class="a" style="left:559px;top:296px;width:12px;height:10.8px;background:#e2edf7;border:0.5px solid #c0d6ea;border-radius:1px"></div>
 <svg class="a" style="left:561.5px;top:298.5px" width="7" height="6" viewBox="0 0 7 6"><path d="M0.5,1 h6 M0.5,2.5 h6 M0.5,4 h6 M0.5,5.5 h6" stroke="#555" stroke-width="0.6"/></svg>
 <div class="a" style="left:573.5px;top:299px;width:6.3px;height:5.5px;border:0.9px solid #4a4a4a;border-radius:0.8px"></div>
 <!-- status -->
 <div class="a t g" style="left:7px;top:298.6px;color:#5e5e5e">3 items</div>
</div>
<div id="task">
 <div class="a" style="left:0;top:0;width:800px;height:0.6px;background:#2c2c2c"></div>
 <!-- weather -->
 <svg class="a" style="left:11px;top:6.5px" width="13" height="13" viewBox="0 0 13 13">
  <defs><radialGradient id="sunG" cx="0.45" cy="0.3" r="0.7"><stop offset="0" stop-color="#ffd24a"/><stop offset="1" stop-color="#ec9a10"/></radialGradient></defs>
  <circle cx="6" cy="6" r="5.6" fill="url(#sunG)"/>
  <path d="M2.6,12.4 a2,2 0 0 1 0.2,-4 a2.8,2.8 0 0 1 5.3,-0.8 a2.3,2.3 0 0 1 1.6,4.8z" fill="#eef2f8"/>
 </svg>
 <div class="a" style="left:27.1px;top:4px;font-size:6.3px;letter-spacing:-0.1px;line-height:8px;color:#f4f4f4;-webkit-text-stroke:0.2px currentColor">33°C</div>
 <div class="a" style="left:27.1px;top:12.6px;font-size:6.4px;letter-spacing:-0.1px;line-height:8px;color:#d8d8d8;-webkit-text-stroke:0.1px currentColor">Partly sunny</div>
 <!-- start -->
 <svg class="a" style="left:285.5px;top:6.5px" width="13" height="13" viewBox="0 0 13 13">
  <defs><linearGradient id="stG" x1="0" y1="0" x2="1" y2="1"><stop offset="0" stop-color="#5ad2fa"/><stop offset="1" stop-color="#1a9ce6"/></linearGradient></defs>
  <rect x="0" y="0" width="6.1" height="6.1" fill="url(#stG)"/><rect x="6.9" y="0" width="6.1" height="6.1" fill="url(#stG)"/>
  <rect x="0" y="6.9" width="6.1" height="6.1" fill="url(#stG)"/><rect x="6.9" y="6.9" width="6.1" height="6.1" fill="url(#stG)"/>
 </svg>
 <!-- search pill -->
 <div class="a" style="left:304.5px;top:4.5px;width:50px;height:16.5px;border-radius:8.5px;background:#2b2b2b;border:0.5px solid #333"></div>
 <svg class="a" style="left:316.5px;top:8.5px" width="8" height="8" viewBox="0 0 8 8"><circle cx="4.8" cy="3.2" r="2.4" fill="none" stroke="#e8e8e8" stroke-width="0.9"/><path d="M3.1,4.9 L0.8,7.2" stroke="#e8e8e8" stroke-width="1"/></svg>
 <div class="a" style="left:327px;top:8.3px;font-size:6.4px;letter-spacing:-0.05px;line-height:8px;color:#e8e8e8;-webkit-text-stroke:0.2px currentColor">Search</div>
 <!-- task view -->
 <svg class="a" style="left:364px;top:6.5px" width="13" height="12" viewBox="0 0 13 12"><rect x="0.5" y="3.5" width="8" height="8" fill="#8a8a8a"/><rect x="4" y="0.5" width="8.5" height="8.5" fill="#f2f2f2"/></svg>
 <!-- chat -->
 <svg class="a" style="left:386.5px;top:6.5px" width="13" height="13" viewBox="0 0 13 13"><circle cx="6.5" cy="6.5" r="6.2" fill="#7a6fe0"/><rect x="3" y="4.3" width="5" height="4.2" rx="0.8" fill="#f4f2ff"/><path d="M8.3,5.5 L10,4.5 V8.3 L8.3,7.3z" fill="#f4f2ff"/></svg>
 <!-- explorer active -->
 <div class="a" style="left:405px;top:2px;width:20.5px;height:21px;border-radius:3px;background:#282828"></div>
 <svg class="a" style="left:409px;top:7px" width="13" height="12" viewBox="0 0 13 12"><path d="M0.5,0.5 h4.5 l1.5,1.5 h6 v9 h-12z" fill="#e8b820"/><path d="M0.5,3 h12 v5 h-12z" fill="#fcd84a"/><path d="M0.5,8 h12 v3.5 h-12z" fill="#1a70c8"/><rect x="3.5" y="8.8" width="6" height="1.6" fill="#4aa8f0"/></svg>
 <div class="a" style="left:412.5px;top:21px;width:7px;height:1.5px;border-radius:1px;background:#8ccaf2"></div>
 <!-- edge -->
 <svg class="a" style="left:431.5px;top:5.3px" width="14" height="14" viewBox="0 0 26 26">
 <circle cx="13" cy="13" r="12.2" fill="url(#edA)"/>
 <path d="M0.8,13 C1.5,9 5,6.5 9,6.5 C12,6.5 14,8 14.5,10 C12,10.5 10.5,13 11,15.5 C12,20 17,22.5 22,21 C20,23.8 16.5,25.2 13,25.2 C6,25.2 0.8,20 0.8,13Z" fill="url(#edB)"/>
 <ellipse cx="13.3" cy="13.6" rx="3.3" ry="3.4" fill="#1a1a1a"/>
 <path d="M16.5,17.2 C19.5,18.2 23,17.5 25.5,15.5 L26,26 L17,26 C19,25 21,23 22,21 C19.5,21.5 17.5,19.5 16.5,17.2Z" fill="#202020"/>
</svg>
 <!-- store -->
 <svg class="a" style="left:455px;top:6.5px" width="13" height="12" viewBox="0 0 13 12"><path d="M4.5,2 V1 h4 v1" fill="none" stroke="#bbb" stroke-width="0.8"/><rect x="0.5" y="2" width="12" height="9.5" rx="1" fill="#f0f0f0"/><rect x="4" y="4.5" width="2.2" height="2.2" fill="#a08858"/><rect x="6.8" y="4.5" width="2.2" height="2.2" fill="#88a060"/><rect x="4" y="7.3" width="2.2" height="2.2" fill="#7090a8"/><rect x="6.8" y="7.3" width="2.2" height="2.2" fill="#b0a060"/></svg>
 <!-- help -->
 <svg class="a" style="left:477.5px;top:5.5px" width="14" height="14" viewBox="0 0 14 14"><circle cx="7" cy="7" r="6.6" fill="#e8f4fc"/><circle cx="7" cy="7" r="5.8" fill="#2896dc"/><text x="7" y="10.2" text-anchor="middle" font-family="Liberation Sans" font-weight="bold" font-size="9" fill="#fff">?</text></svg>
 <!-- powerpoint -->
 <svg class="a" style="left:501px;top:6.5px" width="13" height="12" viewBox="0 0 13 12"><rect x="2" y="0.3" width="10.5" height="11.2" rx="1" fill="#e0644a"/><rect x="0.3" y="2" width="7.2" height="7.6" rx="0.8" fill="#c43e1c"/><text x="3.9" y="8.2" text-anchor="middle" font-family="Liberation Sans" font-weight="bold" font-size="6.3" fill="#fff">P</text><rect x="8.5" y="3" width="2.8" height="2.5" fill="#f6d0c4" opacity="0.8"/></svg>
 <div class="a" style="left:505.5px;top:20px;width:2.5px;height:1.5px;border-radius:1px;background:#9a9a9a"></div>
 <!-- tray -->
 <svg class="a" style="left:658.5px;top:10.5px" width="7" height="4" viewBox="0 0 7 4"><path d="M0.8,3.3 L3.5,0.8 L6.2,3.3" fill="none" stroke="#e0e0e0" stroke-width="0.7"/></svg>
 <div class="a" style="left:672px;top:17.5px;width:13px;height:7.5px;border-radius:4px;opacity:0.6;background:radial-gradient(circle at 30% 70%,#143e78 0,#143e78 35%,#5a2a10 60%,rgba(32,32,32,0) 100%)"></div>
 <svg class="a" style="left:669.5px;top:7px" width="12" height="11" viewBox="0 0 12 11"><path d="M1,8 A5,5 0 0 1 9.5,2.5" fill="none" stroke="#e8e8e8" stroke-width="0.9"/><circle cx="6.5" cy="7" r="3" fill="#3a88dc"/><circle cx="6.5" cy="7" r="3" fill="none" stroke="#cfe4f8" stroke-width="0.5"/></svg>
 <div class="a" style="left:684px;top:4.5px;width:17px;text-align:center;font-size:6.2px;line-height:8.5px;color:#f4f4f4;-webkit-text-stroke:0.12px currentColor">ENG<br>US</div>
 <svg class="a" style="left:708.5px;top:9.5px" width="8" height="6" viewBox="0 0 8 6"><path d="M0.4,2.2 A5.2,5.2 0 0 1 7.6,2.2" fill="none" stroke="#e8e8e8" stroke-width="0.7"/><path d="M1.6,3.4 A3.5,3.5 0 0 1 6.4,3.4" fill="none" stroke="#e8e8e8" stroke-width="0.7"/><path d="M2.9,4.6 A1.6,1.6 0 0 1 5.1,4.6 L4,5.8z" fill="#e8e8e8"/></svg>
 <svg class="a" style="left:720px;top:9px" width="9" height="8" viewBox="0 0 9 8"><path d="M0.5,2.8 h1.8 L4.5,0.8 V7.2 L2.3,5.2 H0.5z" fill="none" stroke="#e8e8e8" stroke-width="0.7"/><path d="M6,2.5 a2.2,2.2 0 0 1 0,3 M7.3,1.5 a3.6,3.6 0 0 1 0,5" fill="none" stroke="#e8e8e8" stroke-width="0.6"/></svg>
 <svg class="a" style="left:733px;top:8.5px" width="9" height="7" viewBox="0 0 9 7"><rect x="2.5" y="1.8" width="6" height="4.5" rx="0.6" fill="#e8e8e8"/><path d="M0.5,0.8 L3,3.5 M1.8,0.4 L4,2.8" stroke="#e8e8e8" stroke-width="0.8"/></svg>
 <div class="a" style="left:746px;top:4.5px;width:31px;text-align:right;font-size:6.2px;letter-spacing:-0.1px;line-height:8.2px;color:#f4f4f4;-webkit-text-stroke:0.1px currentColor">4:04 pm<br>11/4/2023</div>
 <svg class="a" style="left:781px;top:9px" width="8" height="8" viewBox="0 0 8 8"><path d="M3,0.8 A3.6,3.6 0 1 0 7.3,5.3 A3.2,3.2 0 0 1 3,0.8z" fill="none" stroke="#e8e8e8" stroke-width="0.7"/></svg>
</div>
</body></html>
